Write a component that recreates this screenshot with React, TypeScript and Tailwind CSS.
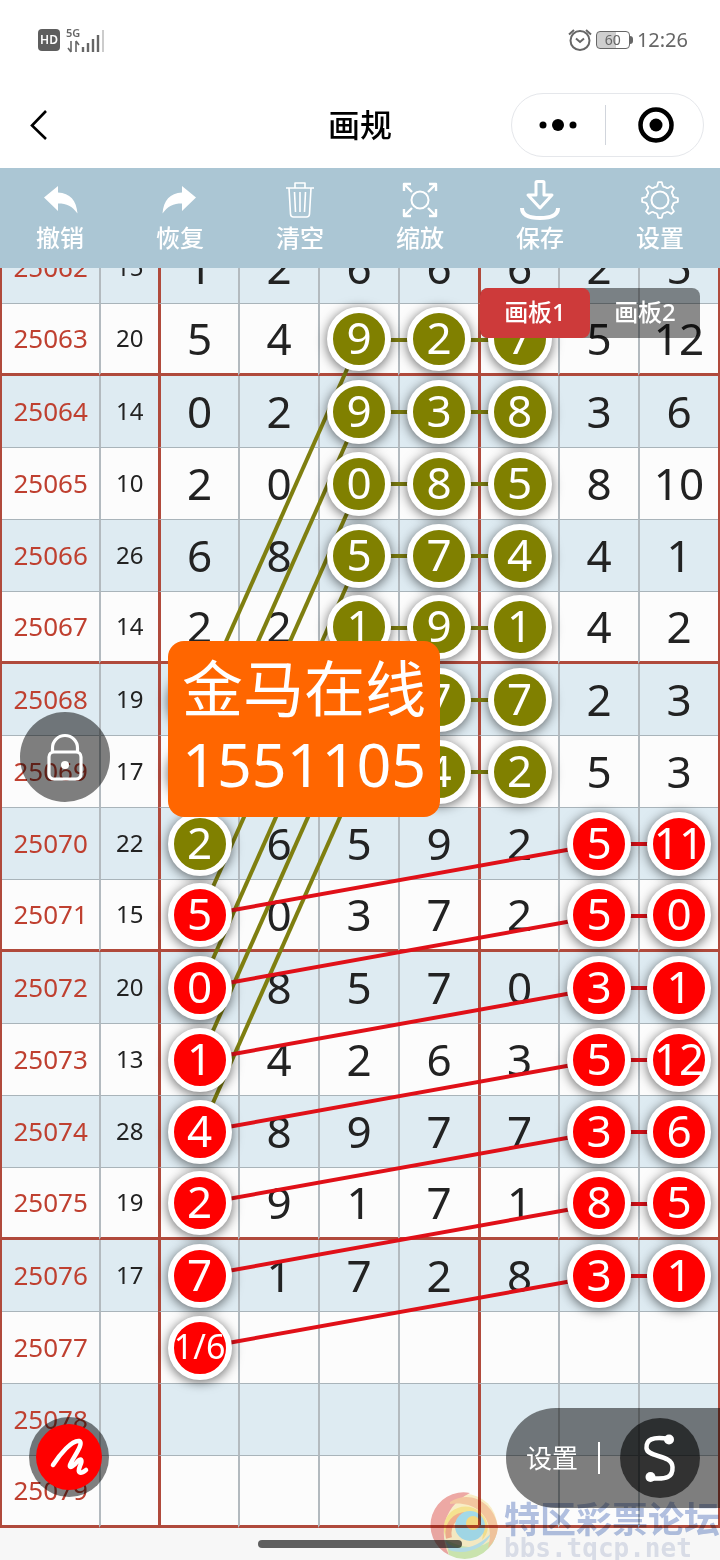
import type { ReactNode } from "react";
import { clsx } from "clsx";

type MarkColor = "olive" | "red";

interface Draw {
  issue: string;
  sum?: number;
  balls: (number | string)[];
  /** Column indexes that carry a round marker. */
  marks?: Partial<Record<number, MarkColor>>;
}

const O = "olive" as const;
const R = "red" as const;

const DRAWS: Draw[] = [
  { issue: "25062", sum: 15, balls: [1, 2, 6, 6, 6, 2, 5] },
  { issue: "25063", sum: 20, balls: [5, 4, 9, 2, 7, 5, 12], marks: { 2: O, 3: O, 4: O } },
  { issue: "25064", sum: 14, balls: [0, 2, 9, 3, 8, 3, 6], marks: { 2: O, 3: O, 4: O } },
  { issue: "25065", sum: 10, balls: [2, 0, 0, 8, 5, 8, 10], marks: { 2: O, 3: O, 4: O } },
  { issue: "25066", sum: 26, balls: [6, 8, 5, 7, 4, 4, 1], marks: { 2: O, 3: O, 4: O } },
  { issue: "25067", sum: 14, balls: [2, 2, 1, 9, 1, 4, 2], marks: { 2: O, 3: O, 4: O } },
  { issue: "25068", sum: 19, balls: ["", "", "", 7, 7, 2, 3], marks: { 0: O, 2: O, 3: O, 4: O } },
  { issue: "25069", sum: 17, balls: ["", "", "", 4, 2, 5, 3], marks: { 0: O, 2: O, 3: O, 4: O } },
  { issue: "25070", sum: 22, balls: [2, 6, 5, 9, 2, 5, 11], marks: { 0: O, 5: R, 6: R } },
  { issue: "25071", sum: 15, balls: [5, 0, 3, 7, 2, 5, 0], marks: { 0: R, 5: R, 6: R } },
  { issue: "25072", sum: 20, balls: [0, 8, 5, 7, 0, 3, 1], marks: { 0: R, 5: R, 6: R } },
  { issue: "25073", sum: 13, balls: [1, 4, 2, 6, 3, 5, 12], marks: { 0: R, 5: R, 6: R } },
  { issue: "25074", sum: 28, balls: [4, 8, 9, 7, 7, 3, 6], marks: { 0: R, 5: R, 6: R } },
  { issue: "25075", sum: 19, balls: [2, 9, 1, 7, 1, 8, 5], marks: { 0: R, 5: R, 6: R } },
  { issue: "25076", sum: 17, balls: [7, 1, 7, 2, 8, 3, 1], marks: { 0: R, 5: R, 6: R } },
  { issue: "25077", balls: ["1/6", "", "", "", "", "", ""], marks: { 0: R } },
  { issue: "25078", balls: ["", "", "", "", "", "", ""] },
  { issue: "25079", balls: ["", "", "", "", "", "", ""] },
];

const ROW_HEIGHT = 72;

const colX = (col: number) => `${((200 + col * 80) / 720) * 100}%`;
const rowY = (row: number) => row * ROW_HEIGHT;

interface Link {
  from: [col: number, row: number];
  to: [col: number, row: number];
  color: MarkColor;
}

const LINKS: Link[] = [
  ...[0, 1, 2, 3, 4, 5, 6].flatMap((i): Link[] => [
    { from: [2, 1 + i], to: [4, 1 + i], color: "olive" },
    { from: [2, 1 + i], to: [0, 6 + i], color: "olive" },
  ]),
  ...[0, 1, 2, 3, 4, 5, 6].flatMap((i): Link[] => [
    { from: [5, 8 + i], to: [6, 8 + i], color: "red" },
    { from: [0, 9 + i], to: [5, 8 + i], color: "red" },
  ]),
];

function StatusBar() {
  return (
    <div className="flex h-20 items-center justify-between px-8 text-[#666]">
      <div className="flex items-center gap-1 pl-1.5">
        <span className="grid h-[22px] w-[22px] place-items-center rounded-sm bg-[#5e5e5e] text-xs font-semibold text-white">
          HD
        </span>
        <svg width="42" height="30" viewBox="0 0 42 30" aria-label="5G" role="img">
          <text x="2" y="12" fontSize="11" fontWeight="600" fill="#666">
            5G
          </text>
          <g stroke="#666" strokeWidth="2" fill="none">
            <path d="M7 16v11M4 23l3 4M12 27V16M15 20l-3-4" strokeWidth="1.6" />
            <path d="M19 27v-5M24 27v-9M29 27V14M34 27V10" strokeWidth="2.4" />
            <path d="M39 27V5" stroke="#ccc" />
          </g>
        </svg>
      </div>
      <div className="flex items-center gap-1">
        <svg width="24" height="24" viewBox="0 0 24 24" fill="none" stroke="#666" strokeWidth="2" aria-hidden="true">
          <circle cx="12" cy="12.5" r="9.5" />
          <path d="M8 10.5l4 3.5 4-3.5M1 6.5L6 2M23 6.5L18 2" />
        </svg>
        <div className="flex items-center">
          <span className="flex h-[18px] w-[34px] items-center justify-center rounded-sm border border-[#666] bg-linear-to-r from-[#cfcfcf] from-60% to-white to-60% text-sm leading-none">
            60
          </span>
          <span className="h-2 w-[3px] rounded-r-sm bg-[#666]" />
        </div>
        <span className="text-xl">12:26</span>
      </div>
    </div>
  );
}

function Header() {
  return (
    <header className="grid h-22 grid-cols-3 items-center px-4 pt-0.5 text-black">
      <button type="button" aria-label="返回" className="w-12 pl-3">
        <svg width="22" height="34" viewBox="0 0 22 34" fill="none" stroke="currentColor" strokeWidth="2.6">
          <path d="M18 3L4 17.500L18 31" />
        </svg>
      </button>
      <h1 className="text-center text-[32px] font-medium leading-none">画规</h1>
      <div className="flex h-16 w-[193px] items-center justify-self-end rounded-full border border-gray-200">
        <button type="button" aria-label="更多" className="grid flex-1 place-items-center">
          <svg width="40" height="14" viewBox="0 0 40 14" fill="currentColor">
            <circle cx="5" cy="7" r="3.500" />
            <circle cx="20" cy="7" r="6" />
            <circle cx="35" cy="7" r="3.500" />
          </svg>
        </button>
        <span className="h-10 w-px bg-gray-300" />
        <button type="button" aria-label="关闭" className="grid flex-1 place-items-center pl-1">
          <svg width="38" height="38" viewBox="0 0 38 38">
            <circle cx="19" cy="19" r="15.500" fill="none" stroke="currentColor" strokeWidth="4.5" />
            <circle cx="19" cy="19" r="6.500" fill="currentColor" />
          </svg>
        </button>
      </div>
    </header>
  );
}

// Eight narrow teeth joined by scooped valleys.
function gearPath(c: number, outer: number, inner: number, teeth: number) {
  const pt = (r: number, a: number) => `${(c + r * Math.sin(a)).toFixed(2)} ${(c - r * Math.cos(a)).toFixed(2)}`;
  const step = (Math.PI * 2) / teeth;
  let d = `M${pt(outer, -0.1)}`;
  for (let k = 0; k < teeth; k++) {
    const a = k * step;
    d += `L${pt(outer, a + 0.1)}L${pt(outer - 3, a + 0.17)}`;
    d += `Q${pt(inner, a + 0.24)} ${pt(inner + 1, a + step / 2)}`;
    d += `Q${pt(inner, a + step - 0.24)} ${pt(outer - 3, a + step - 0.17)}L${pt(outer, a + step - 0.1)}`;
  }
  return d + "Z";
}

const UNDO = "M4 17.500L18 6v6.500c12 .5 18.500 8 19.500 21C32 26 27 23.500 18 23.500V31Z";

const TOOLS: { label: string; icon: ReactNode }[] = [
  { label: "撤销", icon: <path d={UNDO} fill="#fff" stroke="none" /> },
  {
    label: "恢复",
    icon: <path d={UNDO} fill="#fff" stroke="none" transform="matrix(-1 0 0 1 40 0)" />,
  },
  {
    label: "清空",
    icon: (
      <path
        d="M6 8h28M15 8V3h10v5M9 8l1.500 26q.2 3 3 3h13q2.800 0 3-3L31 8M14.500 12l1 20M20 12v20M25.500 12l-1 20"
        strokeWidth="1.600"
      />
    ),
  },
  {
    label: "缩放",
    icon: (
      <>
        <circle cx="20" cy="20" r="8.500" />
        <path
          d="M4 11V4h7M4 4l8 8M29 4h7v7M36 4l-8 8M4 29v7h7M4 36l8-8M36 29v7h-7M36 36l-8-8"
          strokeWidth="2.400"
        />
      </>
    ),
  },
  {
    label: "保存",
    icon: (
      <>
        <path d="M16 2.500q0-1 1-1h6q1 0 1 1V15h8L20 28 8 15h8Z" strokeWidth="3" />
        <path d="M2 28q0 10 18 10t18-10" strokeWidth="4" />
      </>
    ),
  },
  {
    label: "设置",
    icon: (
      <>
        <path d={gearPath(20, 18, 13, 8)} strokeWidth="1.800" />
        <circle cx="20" cy="20" r="8.500" />
      </>
    ),
  },
];

function Toolbar() {
  return (
    <nav className="grid h-25 grid-cols-6 bg-[#abc6d4] text-white">
      {TOOLS.map(({ label, icon }) => (
        <button key={label} type="button" className="flex flex-col items-center pt-3">
          <svg
            width="40"
            height="40"
            viewBox="0 0 40 40"
            fill="none"
            stroke="#fff"
            strokeWidth="2"
            strokeLinejoin="round"
            aria-hidden="true"
          >
            {icon}
          </svg>
          <span className="mt-0.5 text-2xl leading-8 font-medium">{label}</span>
        </button>
      ))}
    </nav>
  );
}

function Mark({ color, children }: { color: MarkColor; children: ReactNode }) {
  const long = String(children).length > 2;
  return (
    <span
      className={clsx(
        "relative z-10 mx-auto flex size-16 items-center justify-center rounded-full border-6 border-white pb-1 text-white shadow-[0_2px_12px_rgba(0,0,0,0.6)]",
        color === "olive" ? "bg-[#808000]" : "bg-[#ff0000]",
        long && "text-[34px]",
      )}
    >
      {children}
    </span>
  );
}

function DrawTable() {
  return (
    <table className="-mt-9 w-full table-fixed border-separate border-spacing-0 border-x-2 border-[#b04a3c] text-center leading-none text-[#222]">
      <colgroup>
        <col className="w-[13.6%]" />
        <col className="w-[8.2%]" />
      </colgroup>
      <tbody>
        {DRAWS.map(({ issue, sum, balls, marks }, row) => {
          const line = row % 4 === 1 ? "border-b-3 border-b-[#b04a3c]" : "border-b border-b-[#a9b4ba]";
          return (
            <tr key={issue} className={clsx("h-18", row % 2 === 0 ? "bg-[#deebf2]" : "bg-[#fcfcfc]")}>
              <th scope="row" className={clsx("p-0 pb-0.5 text-[26px] font-normal text-[#bf4030]", line)}>
                {issue}
              </th>
              <td className={clsx("border-l-2 border-l-[#b3babf] p-0 pb-0.5 text-2xl", line)}>{sum}</td>
              {balls.map((ball, col) => {
                const mark = marks?.[col];
                return (
                  <td
                    key={col}
                    className={clsx(
                      "p-0 text-[44px]",
                      !mark && "pb-0.5",
                      col % 4 === 0 ? "border-l-3 border-l-[#b04a3c]" : "border-l-2 border-l-[#b3babf]",
                      line,
                    )}
                  >
                    {mark ? <Mark color={mark}>{ball}</Mark> : ball}
                  </td>
                );
              })}
            </tr>
          );
        })}
      </tbody>
    </table>
  );
}

function Links() {
  return (
    <svg className="absolute inset-0 size-full" aria-hidden="true">
      {LINKS.map(({ from, to, color }, i) => (
        <line
          key={i}
          x1={colX(from[0])}
          y1={rowY(from[1])}
          x2={colX(to[0])}
          y2={rowY(to[1])}
          stroke={color === "olive" ? "#7f7f10" : "#e01018"}
          strokeWidth="4"
        />
      ))}
    </svg>
  );
}

function Board() {
  return (
    <main className="relative overflow-hidden">
      <DrawTable />
      <Links />

      <div className="absolute top-5 right-5 z-20 flex rounded-lg bg-black/45 text-2xl leading-none font-medium text-white">
        <button type="button" className="h-[50px] w-[110px] rounded-lg bg-[#cd3a3a] pb-0.5">
          画板1
        </button>
        <button type="button" className="h-[50px] w-[110px] pb-0.5">
          画板2
        </button>
      </div>

      <div className="absolute top-[373px] left-[168px] z-20 rounded-2xl bg-[#ff6600] px-3.5 pt-2.5 pb-4 text-center text-[61px] leading-[75px] text-white">
        <p>金马在线</p>
        <p>1551105</p>
      </div>

      <button
        type="button"
        aria-label="锁定"
        className="absolute top-[444px] left-5 z-20 grid size-[90px] place-items-center rounded-full bg-black/50"
      >
        <svg width="40" height="50" viewBox="0 0 40 50" fill="none" stroke="#fff" strokeWidth="3.200">
          <rect x="4" y="20" width="32" height="27" rx="5" />
          <path d="M7.500 20v-4a12.500 12.500 0 0 1 25 0v4" />
          <circle cx="20" cy="33" r="4" fill="#fff" stroke="none" />
        </svg>
      </button>

      <button
        type="button"
        aria-label="画笔"
        className="absolute bottom-[31px] left-[29px] z-20 grid size-20 place-items-center rounded-full bg-black/50"
      >
        <span className="grid size-[66px] place-items-center rounded-full bg-[#ff0000]">
          <svg
            width="44"
            height="44"
            viewBox="0 0 44 44"
            fill="none"
            stroke="#fff"
            strokeWidth="4.500"
            strokeLinecap="round"
            strokeLinejoin="round"
          >
            <path d="M6 30C13 19 25 5 32 6C38 8 25 24 23 30C22 34 27 31 30 27C34 22 36 25 33 31C30 38 33 40 39 35" />
          </svg>
        </span>
      </button>

      <div className="absolute right-0 bottom-5 z-20 flex h-25 w-[214px] items-center justify-between rounded-l-full bg-black/50 pr-5 pl-5 text-white">
        <button type="button" className="text-[26px] leading-none">
          设置
        </button>
        <span className="h-8 w-0.5 bg-white" />
        <button type="button" aria-label="曲线" className="grid size-20 place-items-center rounded-full bg-black/60">
          <svg width="40" height="56" viewBox="0 0 40 56" fill="none" stroke="#fff" strokeWidth="4.500">
            <path d="M29 9C12 6 6 10 6.500 18C7 28 32 24 32.500 37C33 47 27 50 10 48" />
            <circle cx="29" cy="9.500" r="5" fill="#fff" stroke="none" />
            <circle cx="10.500" cy="47" r="5" fill="#fff" stroke="none" />
          </svg>
        </button>
      </div>
    </main>
  );
}

function ForumBadge() {
  return (
    <div className="pointer-events-none absolute right-0 bottom-0 z-30 flex items-end gap-1 mix-blend-multiply">
      <svg width="70" height="68" viewBox="0 0 70 68" fill="none" aria-hidden="true">
        <circle cx="35" cy="34" r="32" fill="#fbf0c8" />
        <path d="M40 1A33 33 0 0 0 19 63C8 40 14 14 40 1Z" fill="#f0aaa6" />
        <path d="M19 63A33 33 0 0 0 66 44C52 58 36 58 16 48Z" fill="#d0ebb4" />
        <path d="M14 46C20 60 46 60 62 40C56 56 36 64 19 58Z" fill="#b9e2ec" />
        <path d="M20 10C42 -4 66 14 68 36A33 33 0 0 1 58 56C66 28 48 8 20 12Z" fill="#f6c9a0" />
        <path d="M15 44C8 20 34 6 50 20C62 32 58 42 52 48C56 32 46 20 33 22C22 24 17 34 15 44Z" fill="#f8e592" />
        <path d="M19 46C16 32 26 22 38 23" stroke="#f3b08e" strokeWidth="6" />
        <circle cx="40" cy="34" r="15" fill="#a4dcec" />
        <circle cx="43" cy="31" r="7" fill="#f7dc83" />
      </svg>
      <div>
        <p className="text-4xl leading-8 font-bold text-[#b3c2e2]">特区彩票论坛</p>
        <p className="font-['DejaVu_Sans_Mono',monospace] text-[26px] leading-6 font-bold text-[#dfe3ee]">
          bbs.tqcp.net
        </p>
      </div>
    </div>
  );
}

export default function App() {
  return (
    <div className="relative overflow-hidden bg-white font-['Noto_Sans','Noto_Sans_CJK_SC',sans-serif]">
      <StatusBar />
      <Header />
      <Toolbar />
      <Board />
      <footer className="flex h-8 justify-center bg-[#f7f7f7] pt-3">
        <span className="h-2 w-[204px] rounded-full bg-[#5f5f5f]" />
      </footer>
      <ForumBadge />
    </div>
  );
}
